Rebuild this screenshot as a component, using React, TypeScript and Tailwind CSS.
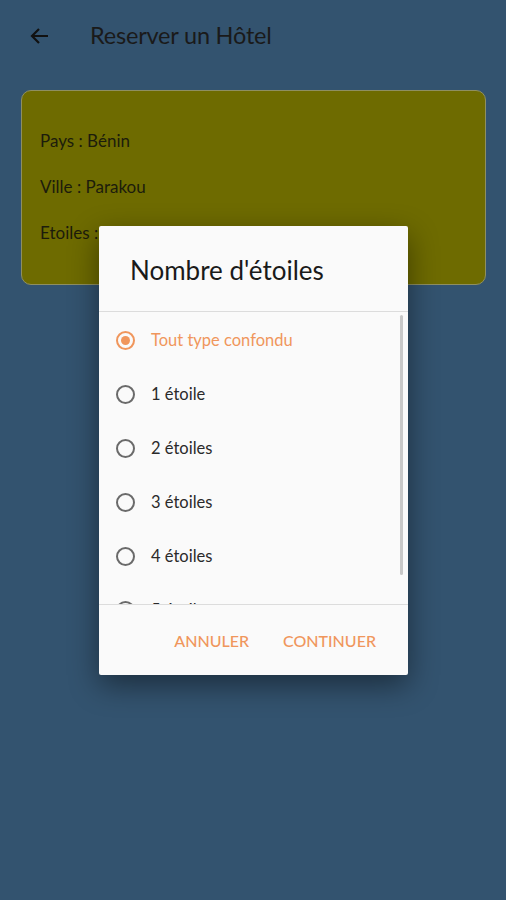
import React from "react";

const items = ["Tout type confondu", "1 étoile", "2 étoiles", "3 étoiles", "4 étoiles", "5 étoiles"];

export default function App() {
  return (
    <div
      className="relative w-[506px] h-[900px] overflow-hidden bg-[#33536f]"
      style={{ fontFamily: "Lato, 'Open Sans', sans-serif" }}
    >
      {/* Header */}
      <div className="flex items-center h-[72px] pl-[28px]">
        <svg width="24" height="24" viewBox="0 0 24 24" className="text-[#111]">
          <path d="M20 12H5M11 5l-7 7 7 7" fill="none" stroke="currentColor" strokeWidth="2.2" />
        </svg>
        <span className="ml-[38px] text-[23.5px] text-[#1a1a1a] tracking-[-0.2px]">Reserver un Hôtel</span>
      </div>

      {/* Card */}
      <div className="ml-[21px] w-[465px] mt-[18px] h-[195px] rounded-[10px] bg-[#6e6b00] border border-[#8f8f60] pl-[18px] pt-[40px] flex flex-col gap-[26px] text-[17px] text-[#1c1c0c]">
        <div className="leading-[20px]">Pays : Bénin</div>
        <div className="leading-[20px]">Ville : Parakou</div>
        <div className="leading-[20px]">Etoiles :</div>
      </div>

      {/* Dialog */}
      <div className="absolute left-[99px] top-[226px] w-[309px] h-[449px] bg-[#fafafa] rounded-[2px] shadow-[0_10px_30px_rgba(0,0,0,0.45)] flex flex-col">
        <div className="h-[86px] flex items-center pl-[31px] pt-[4px] text-[26px] text-[#1a1a1a] border-b border-[#dcdcdc]">
          Nombre d'étoiles
        </div>
        <div className="relative h-[293px] overflow-hidden border-b border-[#dcdcdc]">
          <div className="absolute right-[5px] top-[3px] w-[3px] h-[260px] bg-[#c8c8c8] rounded-full" />
          <div className="flex flex-col pt-[1px]">
            {items.map((t, i) => (
              <div key={t} className="h-[54px] flex items-center pl-[17px]">
                {i === 0 ? (
                  <div className="w-[19px] h-[19px] rounded-full border-2 border-[#f0965c] flex items-center justify-center">
                    <div className="w-[9px] h-[9px] rounded-full bg-[#f0965c]" />
                  </div>
                ) : (
                  <div className="w-[19px] h-[19px] rounded-full border-2 border-[#6a6a6a]" />
                )}
                <span
                  className={
                    "ml-[16px] text-[16.5px] " + (i === 0 ? "text-[#f0965c]" : "text-[#2a2a2a]")
                  }
                >
                  {t}
                </span>
              </div>
            ))}
          </div>
        </div>
        <div className="flex-1 flex items-center justify-end pr-[32px] gap-[34px] pt-[2px] text-[16px] text-[#f0965c] font-medium">
          <span>ANNULER</span>
          <span>CONTINUER</span>
        </div>
      </div>
    </div>
  );
}
